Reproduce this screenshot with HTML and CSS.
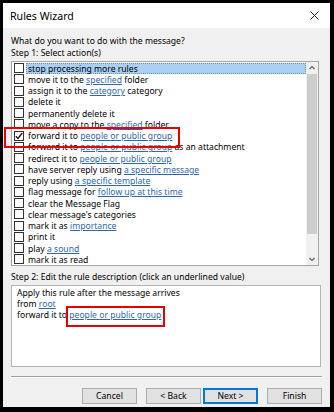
FILE: index.html
```html
<!DOCTYPE html>
<html lang="en">

<head>
    <meta charset="UTF-8">
    <meta name="viewport" content="width=device-width, initial-scale=1.0">
    <title>Rules Wizard</title>
    <link rel="stylesheet" href="styles.css">
</head>

<body>
    <div class="window">
        <header class="titlebar">
            <span class="title">Rules Wizard</span>
            <svg class="close" width="9" height="9" viewBox="0 0 9 9">
                <path d="M0.5 0.5 L8.5 8.5 M8.5 0.5 L0.5 8.5" stroke="#222" stroke-width="1" fill="none" />
            </svg>
        </header>
        <main class="content">
            <p class="prompt">What do you want to do with the message?</p>
            <p class="step">Step 1: Select action(s)</p>
            <div class="list-box">
                <ul class="actions">
                    <li class="selected"><span class="box"></span><span class="label">stop processing more rules</span></li>
                    <li><span class="box"></span><span class="label">move it to the <a>specified</a> folder</span></li>
                    <li><span class="box"></span><span class="label">assign it to the <a>category</a> category</span></li>
                    <li><span class="box"></span><span class="label">delete it</span></li>
                    <li><span class="box"></span><span class="label">permanently delete it</span></li>
                    <li><span class="box"></span><span class="label">move a copy to the <a>specified</a> folder</span></li>
                    <li class="checked">
                        <span class="box">
                            <svg width="8" height="8" viewBox="0 0 8 8">
                                <path d="M0.8 4.2 L3 6.4 L7.2 1" stroke="#111" stroke-width="1.3" fill="none" />
                            </svg>
                        </span>
                        <span class="label">forward it to <a>people or public group</a></span>
                    </li>
                    <li><span class="box"></span><span class="label">forward it to <a>people or public group</a> as an attachment</span></li>
                    <li><span class="box"></span><span class="label">redirect it to <a>people or public group</a></span></li>
                    <li><span class="box"></span><span class="label">have server reply using <a>a specific message</a></span></li>
                    <li><span class="box"></span><span class="label">reply using <a>a specific template</a></span></li>
                    <li><span class="box"></span><span class="label">flag message for <a>follow up at this time</a></span></li>
                    <li><span class="box"></span><span class="label">clear the Message Flag</span></li>
                    <li><span class="box"></span><span class="label">clear message's categories</span></li>
                    <li><span class="box"></span><span class="label">mark it as <a>importance</a></span></li>
                    <li><span class="box"></span><span class="label">print it</span></li>
                    <li><span class="box"></span><span class="label">play <a>a sound</a></span></li>
                    <li><span class="box"></span><span class="label">mark it as read</span></li>
                </ul>
                <div class="scrollbar">
                    <svg class="arrow" width="12" height="12" viewBox="0 0 12 12">
                        <path d="M3.5 7 L6 4.5 L8.5 7" stroke="#606060" stroke-width="1.2" fill="none" />
                    </svg>
                    <div class="track">
                        <div class="thumb"></div>
                    </div>
                    <svg class="arrow" width="12" height="12" viewBox="0 0 12 12">
                        <path d="M3.5 5 L6 7.5 L8.5 5" stroke="#606060" stroke-width="1.2" fill="none" />
                    </svg>
                </div>
            </div>
            <p class="step step-two">Step 2: Edit the rule description (click an underlined value)</p>
            <div class="description">
                <p>Apply this rule after the message arrives</p>
                <p>from <a>root</a></p>
                <p>forward it to <a class="marked">people or public group</a></p>
            </div>
            <hr class="separator">
            <div class="buttons">
                <button>Cancel</button>
                <button class="back">&lt; Back</button>
                <button class="primary">Next &gt;</button>
                <button>Finish</button>
            </div>
        </main>
    </div>
</body>

</html>
```

FILE: styles.css
```css
* {
    margin: 0;
    padding: 0;
    box-sizing: border-box;
}

body {
    background: #000;
    font-family: 'Noto Sans', 'Liberation Sans', sans-serif;
    font-size: 8.6px;
    color: #000;
}

.window {
    margin: 3px 4px 5px 3px;
    height: 404px;
    background: #f0f0f0;
    display: flex;
    flex-direction: column;
}

.titlebar {
    height: 25px;
    background: #fff;
    display: flex;
    justify-content: space-between;
    align-items: center;
    padding: 0 11px 0 7px;
}

.title {
    font-size: 10.6px;
}

.content {
    padding: 7px 0 0 8px;
    line-height: 12px;
}

.step {
    margin-bottom: 2px;
}

a {
    color: #2f67ad;
    text-decoration: underline;
}

/* Step 1 list */

.list-box {
    width: 308px;
    height: 205px;
    background: #fff;
    border: 1px solid #a5a5a5;
    display: flex;
}

.actions {
    list-style: none;
    flex: 1;
    padding-top: 0.5px;
}

.actions li {
    height: 11.25px;
    display: flex;
    align-items: center;
    white-space: nowrap;
}

.box {
    width: 10px;
    height: 10px;
    margin: 0 2px 0 2px;
    border: 1px solid #333;
    background: #fff;
    flex-shrink: 0;
    display: flex;
    align-items: center;
    justify-content: center;
}

.label {
    flex: 1;
    height: 11px;
    line-height: 10px;
    padding-left: 1px;
    border: 1px dotted transparent;
}

.selected .label {
    background: #a9cff2;
    border-color: #7a8ea0;
}

.checked {
    position: relative;
}

.checked::after {
    content: '';
    position: absolute;
    left: -8px;
    top: -3px;
    width: 172px;
    height: 17px;
    border: 2px solid #e60000;
}

.scrollbar {
    width: 12px;
    background: #f0f0f0;
    display: flex;
    flex-direction: column;
}

.track {
    flex: 1;
    padding: 0 1px;
}

.thumb {
    height: 160px;
    background: #cdcdcd;
}

/* Step 2 */

.step-two {
    margin-top: 5px;
}

.description {
    width: 310px;
    height: 82px;
    background: #fff;
    border: 1px solid #b4b4b4;
    padding: 2px 5px;
    line-height: 11px;
}

.marked {
    position: relative;
}

.marked::after {
    content: '';
    position: absolute;
    left: -3px;
    top: -3px;
    right: -4px;
    height: 17px;
    border: 2px solid #e60000;
}

.separator {
    width: 311px;
    margin-top: 9px;
    border: none;
    border-top: 1px solid #a0a0a0;
    border-bottom: 1px solid #fff;
}

.buttons {
    display: flex;
    justify-content: flex-end;
    gap: 9px;
    width: 311px;
    margin-top: 10px;
}

.buttons button {
    width: 55px;
    height: 16px;
    font-family: inherit;
    font-size: 8.6px;
    background: #e1e1e1;
    border: 1px solid #adadad;
    color: #000;
}

.buttons .back {
    margin-right: -7px;
}

.buttons .primary {
    border: 1px solid #0078d7;
    box-shadow: inset 0 0 0 1px #0078d7;
}
```
